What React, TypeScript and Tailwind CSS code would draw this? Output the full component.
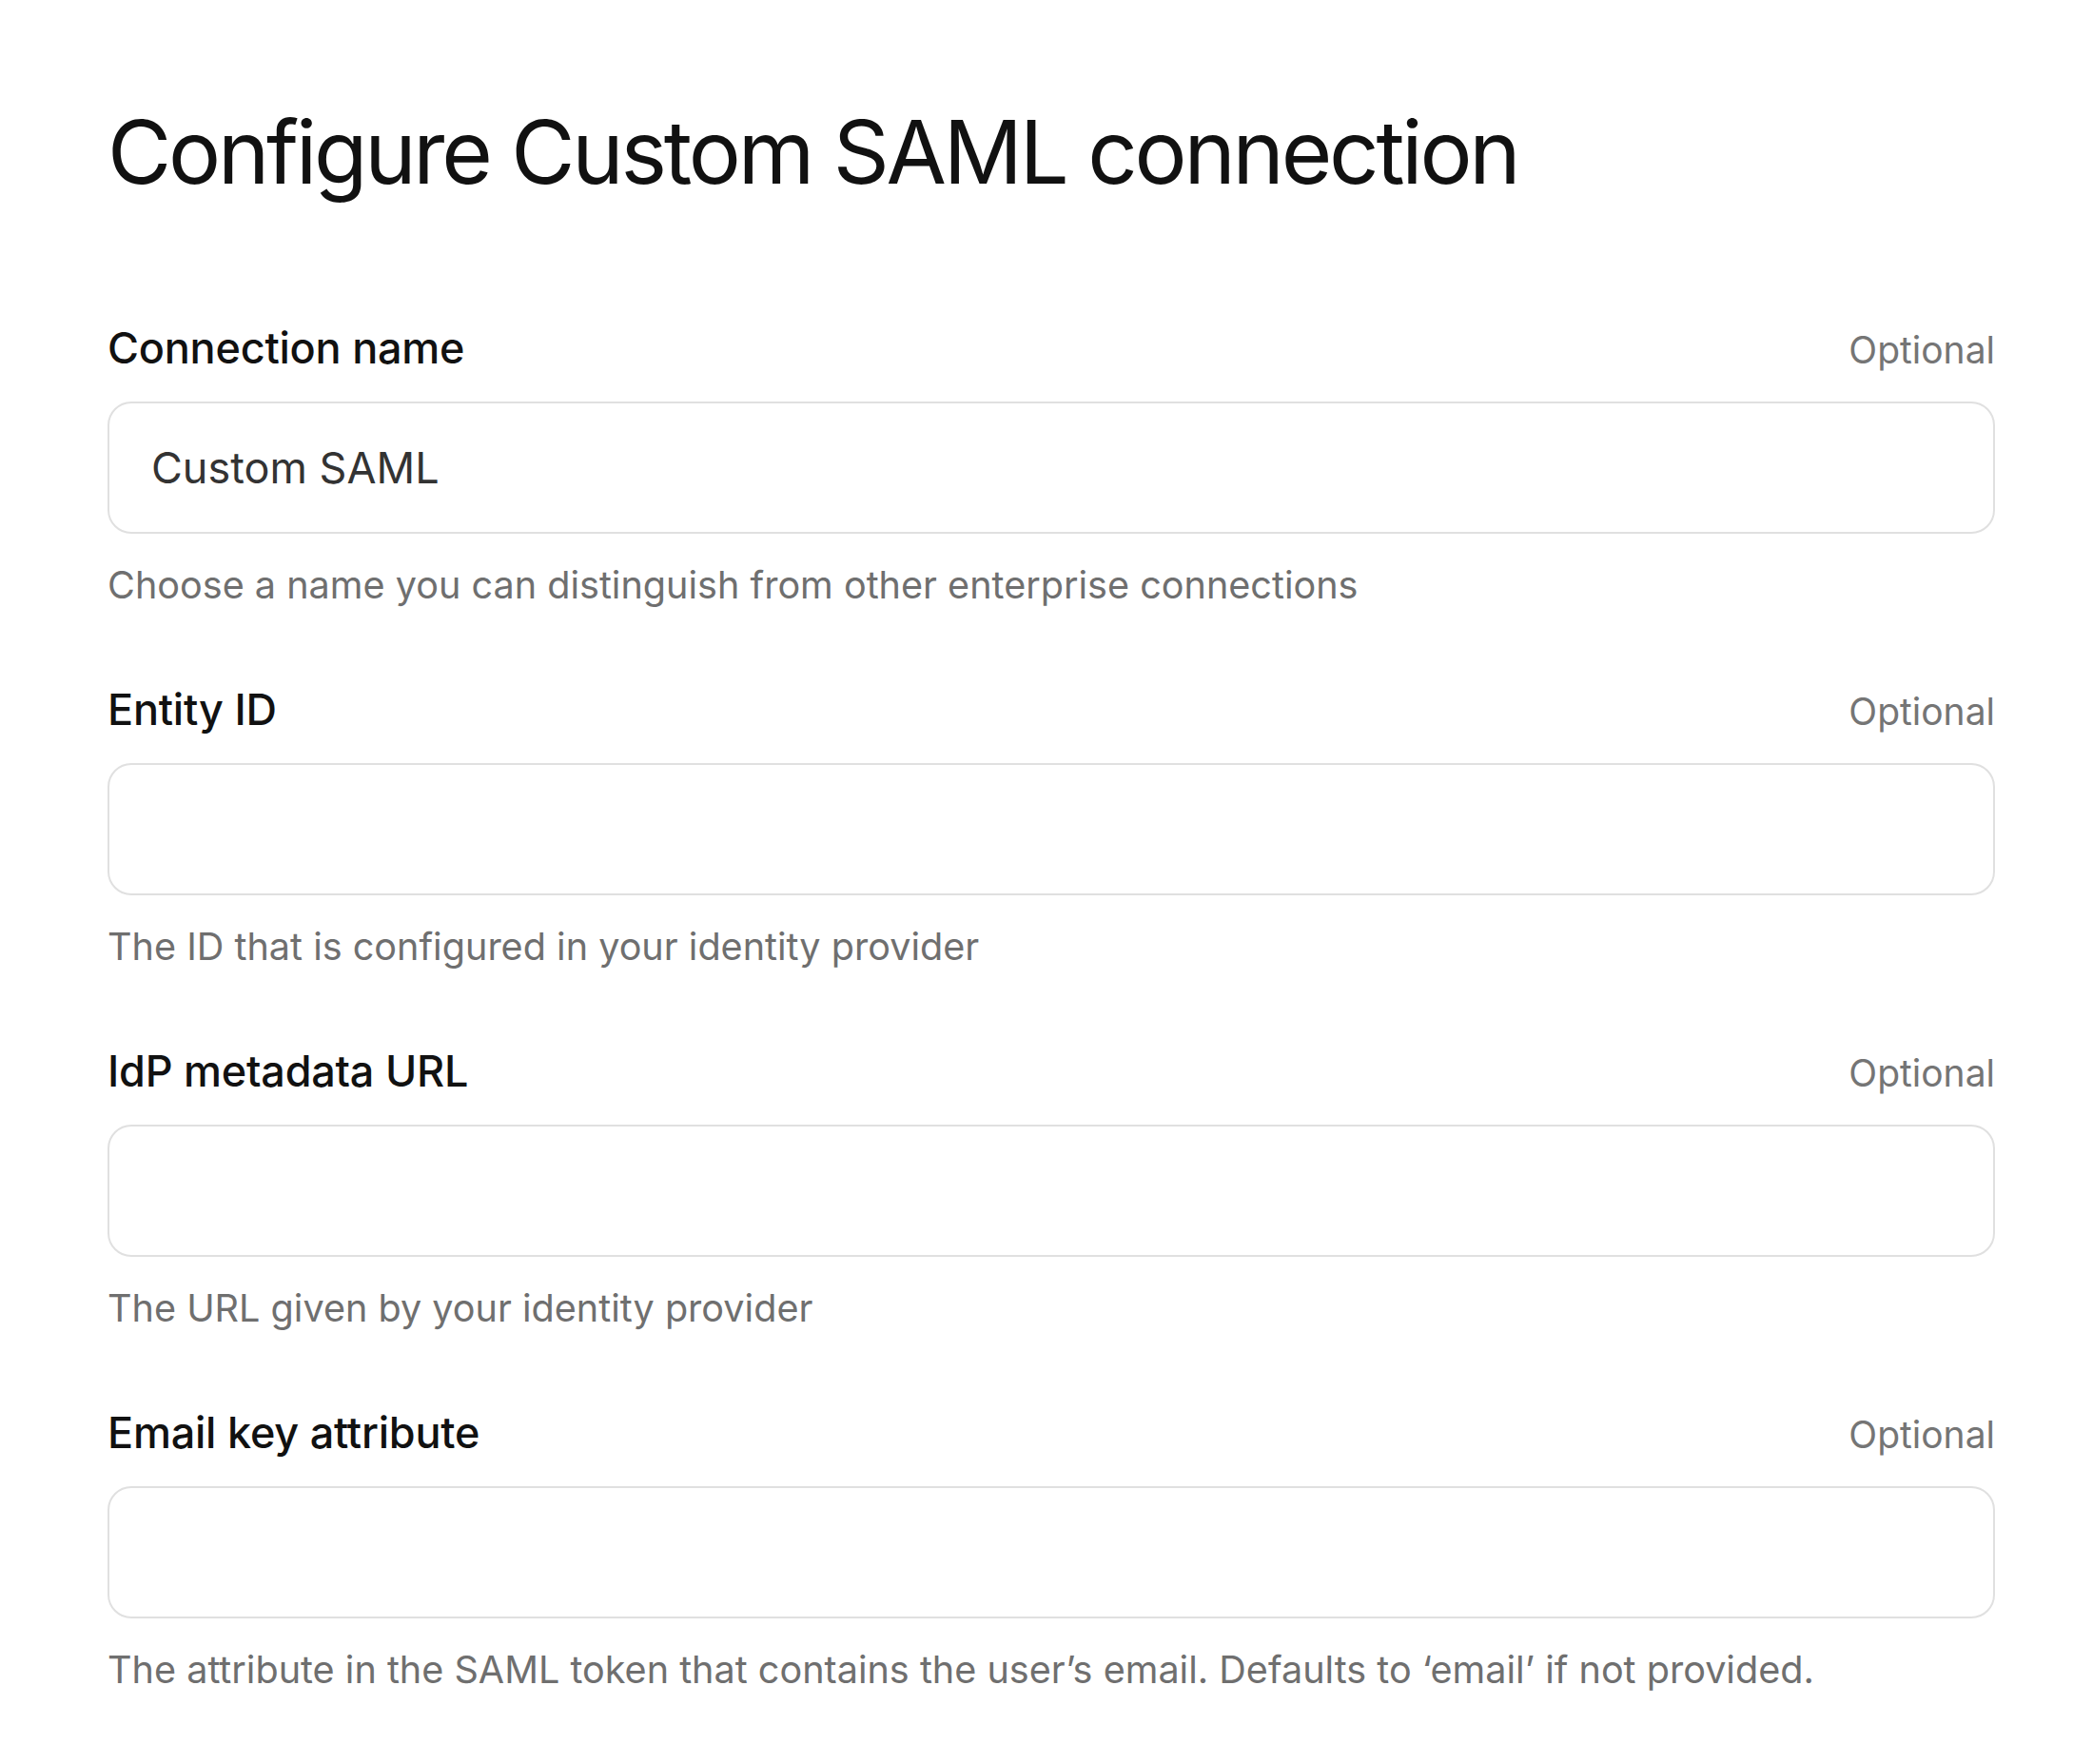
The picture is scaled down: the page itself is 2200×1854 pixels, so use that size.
import React from "react";

type Field = {
  label: string;
  value?: string;
  hint: string;
};

const fields: Field[] = [
  {
    label: "Connection name",
    value: "Custom SAML",
    hint: "Choose a name you can distinguish from other enterprise connections",
  },
  { label: "Entity ID", hint: "The ID that is configured in your identity provider" },
  { label: "IdP metadata URL", hint: "The URL given by your identity provider" },
  {
    label: "Email key attribute",
    hint: "The attribute in the SAML token that contains the user\u2019s email. Defaults to \u2018email\u2019 if not provided.",
  },
];

function FormField({ label, value, hint }: Field) {
  return (
    <div className="flex flex-col">
      <div className="flex items-baseline justify-between">
        <label className="text-[45px] leading-[54px] font-medium tracking-[-0.005em] text-[#111111]">{label}</label>
        <span className="text-[39px] leading-[48px] text-[#757575]">Optional</span>
      </div>
      <input
        defaultValue={value}
        className="mt-[29px] h-[139px] w-full rounded-[25px] border-2 border-[#e0e0e0] bg-white px-[44px] text-[45px] text-[#333333] outline-none"
      />
      <p className="mt-[30px] text-[39.6px] leading-[48px] text-[#6f6f6f]">{hint}</p>
    </div>
  );
}

export default function App() {
  return (
    <div
      className="min-h-screen w-full bg-white"
      style={{ fontFamily: "Inter, 'Noto Sans', sans-serif" }}
    >
      <div className="ml-[113px] w-[1984px] pt-[105px]">
        <h1 className="text-[92px] leading-[110px] font-normal tracking-[-0.035em] text-[#111111]">
          Configure Custom SAML connection
        </h1>
        <div className="mt-[124px] flex flex-col gap-[80px]">
          {fields.map((f) => (
            <FormField key={f.label} {...f} />
          ))}
        </div>
      </div>
    </div>
  );
}
